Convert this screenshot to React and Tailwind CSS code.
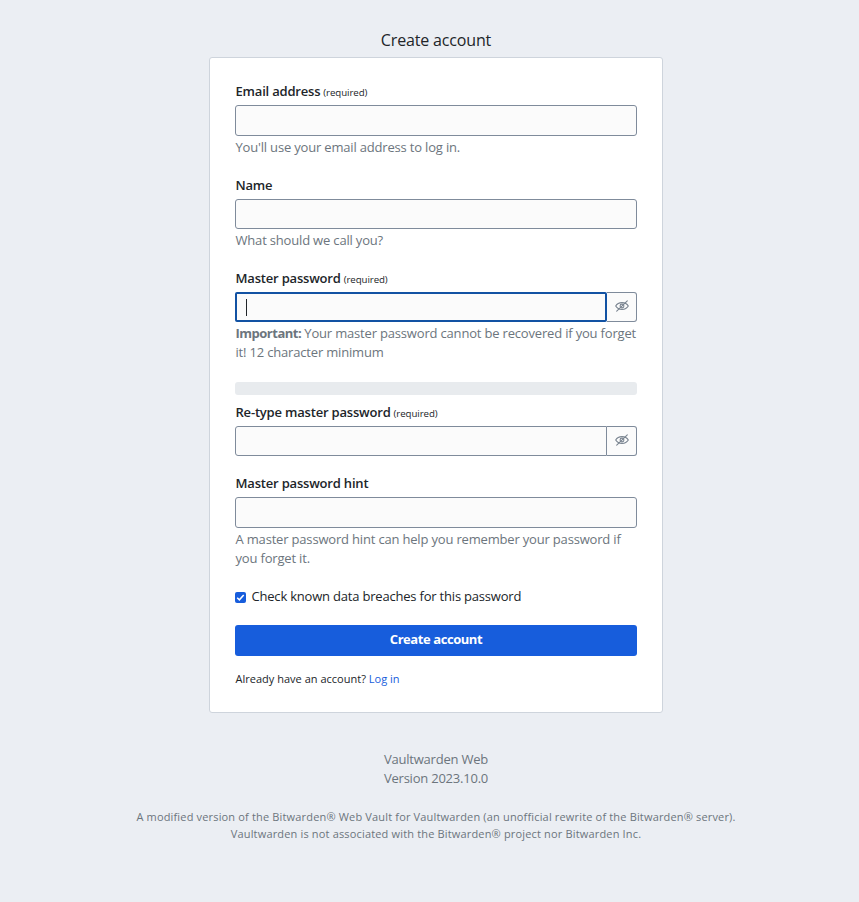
const inputBase = "block w-full border border-[#7f8b9b] bg-[#fbfbfb] px-[10px] text-[13px] outline-none";

function EyeSlash() {
  return (
    <svg className="mb-[2px]" width="14" height="12" viewBox="0 0 14 12" fill="none" stroke="#7a8490" strokeWidth="1.1" strokeLinecap="round">
      <path d="M0.7 6C2 3.700 4.200 2.600 7 2.600s5 1.100 6.300 3.400C12 8.300 9.800 9.400 7 9.400S2 8.300 .7 6Z" />
      <circle cx="7" cy="6" r="1.900" />
      <path d="M1.700 11.200 12.300 .8" />
    </svg>
  );
}

function Label({ children, required }) {
  return (
    <label className="mb-1 block h-[19px] pl-[0.5px] text-[13px] leading-[19px] font-semibold tracking-[-0.19px] whitespace-nowrap text-[#212529]">
      {children}
      {required && <span className="ml-[3px] text-[9.700px] font-normal tracking-[-0.08px]">(required)</span>}
    </label>
  );
}

function Hint({ children }) {
  return (
    <p className="mt-[2px] pl-[0.5px] text-[13px] leading-[19px] tracking-[-0.18px] whitespace-nowrap text-[#6c757d]">{children}</p>
  );
}

export default function App() {
  return (
    <div className="flex h-[902px] w-full flex-col items-center bg-[#ebeef3] pt-[30px] pl-[13px] font-['Open_Sans','Noto_Sans',sans-serif] text-[#212529]">
      <h1 className="mb-[6px] text-[16px] leading-[21px] font-normal tracking-[-0.16px]">Create account</h1>
      <form className="h-[656px] w-[454px] rounded-[3px] border border-[#ced4dc] bg-white px-[25px] pt-6">
        <Label required>Email address</Label>
        <input className={inputBase + " h-[31px] rounded-[3px]"} />
        <Hint>You'll use your email address to log in.</Hint>

        <div className="mt-[19px]">
          <Label>Name</Label>
          <input className={inputBase + " h-[30px] rounded-[3px]"} />
          <Hint>What should we call you?</Hint>
        </div>

        <div className="mt-[19px]">
          <Label required>Master password</Label>
          <div className="flex h-[30px]">
            <div className="flex w-[372px] items-center rounded-[2px] border-2 border-[#1252a3] bg-[#fbfbfb] pl-[9px]">
              <span className="h-[17px] w-px bg-[#212529]" />
            </div>
            <button type="button" className="flex w-[30px] items-center justify-center rounded-r-[3px] border border-l-0 border-[#7f8b9b] bg-[#fbfbfb]">
              <EyeSlash />
            </button>
          </div>
          <Hint>
            <b className="font-bold tracking-[-0.5px]">Important:</b> Your master password cannot be recovered if you forget<br />
            it! 12 character minimum
          </Hint>
        </div>

        <div className="mt-5 h-[13px] rounded-[3px] bg-[#e8ebee]" />

        <div className="mt-2">
          <Label required>Re-type master password</Label>
          <div className="flex h-[30px]">
            <input className={inputBase + " h-[30px] rounded-l-[3px]"} />
            <button type="button" className="flex w-[30px] shrink-0 items-center justify-center rounded-r-[3px] border border-l-0 border-[#7f8b9b] bg-[#fbfbfb]">
              <EyeSlash />
            </button>
          </div>
        </div>

        <div className="mt-[18px]">
          <Label>Master password hint</Label>
          <input className={inputBase + " h-[31px] rounded-[3px]"} />
          <Hint>
            A master password hint can help you remember your password if<br />
            you forget it.
          </Hint>
        </div>

        <label className="mt-[19px] flex h-[19px] items-center text-[13px] leading-[19px] tracking-[-0.2px] whitespace-nowrap">
          <span className="mt-[2px] mr-[5.500px] flex h-[11px] w-[11px] items-center justify-center rounded-[2px] bg-[#175ddc]">
            <svg width="9" height="9" viewBox="0 0 9 9" fill="none" stroke="white" strokeWidth="1.500">
              <path d="M1.200 4.700 3.400 6.800 7.700 1.900" />
            </svg>
          </span>
          Check known data breaches for this password
        </label>

        <button type="button" className="mt-[19px] block h-[31px] w-full rounded-[3px] bg-[#175ddc] pb-[2px] text-[13px] font-bold tracking-[-0.43px] text-white">
          Create account
        </button>
        <p className="mt-[14px] pl-[0.5px] text-[11px] leading-[18px] tracking-[0.01px]">
          Already have an account? <a className="text-[#175ddc]">Log in</a>
        </p>
      </form>

      <footer className="mt-[37px] text-center text-[#6c757d]">
        <p className="text-[13px] leading-[19px] tracking-[-0.22px]">
          Vaultwarden Web<br />
          Version 2023.10.0
        </p>
        <p className="mt-5 text-[11px] leading-[17px] tracking-[0.165px] whitespace-nowrap">
          A modified version of the Bitwarden® Web Vault for Vaultwarden (an unofficial rewrite of the Bitwarden® server).<br />
          Vaultwarden is not associated with the Bitwarden® project nor Bitwarden Inc.
        </p>
      </footer>
    </div>
  );
}
